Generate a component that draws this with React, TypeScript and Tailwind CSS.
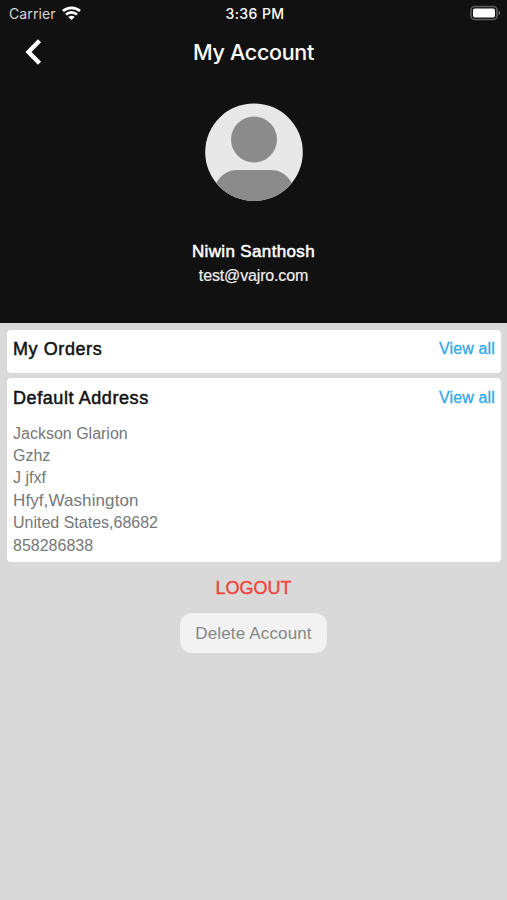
const addressLines = [
  { text: "Jackson Glarion" },
  { text: "Gzhz" },
  { text: "J jfxf" },
  { text: "Hfyf,Washington", large: true },
  { text: "United States,68682" },
  { text: "858286838" },
];

function StatusBar() {
  return (
    <div className="grid h-7 grid-cols-[1fr_80px_1fr] items-center pl-[9px] pr-[6px] font-['Inter',sans-serif] text-white">
      <div className="flex items-center gap-[6px]">
        <span className="text-[14px] leading-7 tracking-[0.1px] text-[#d6d6d6]">
          Carrier
        </span>
        <svg className="-mt-[2px]" width="19" height="14" viewBox="0 0 19 14" fill="none" stroke="white" strokeWidth="2.7">
          <path d="M1 5.1C5.7 .7 13.3 .7 18 5.1" />
          <path d="M4 8.6C7 5.7 12 5.7 15 8.6" />
          <path d="M9.5 13.9 6.3 10.900C8.1 9.2 10.900 9.2 12.700 10.900Z" fill="white" stroke="none" />
        </svg>
      </div>
      <span className="text-center text-[14px] font-medium leading-7 tracking-[0.4px]">
        3:36 PM
      </span>
      <svg className="-mt-[2px] ml-auto" width="31" height="16" viewBox="0 0 31 16">
        <rect x="1" y="1.5" width="26" height="13" rx="3.6" fill="#111" stroke="#5c5c5c" strokeWidth="1.6" />
        <rect x="3" y="3.5" width="22" height="9" rx="1.8" fill="white" />
        <path d="M28.6 5.6C30.8 6.6 30.8 9.4 28.6 10.4Z" fill="#6b6b6b" />
      </svg>
    </div>
  );
}

function Avatar() {
  return (
    <svg className="mx-auto mt-[27px]" width="98" height="98" viewBox="0 0 98 98">
      <defs>
        <clipPath id="avatar">
          <circle cx="49" cy="49.2" r="48.8" />
        </clipPath>
      </defs>
      <g clipPath="url(#avatar)">
        <rect width="98" height="98" fill="#e8e8e8" />
        <circle cx="49" cy="36.5" r="23" fill="#8b8b8b" />
        <path d="M5 98V90L11 80.500C16 71.500 23 67 32 67H66C75 67 82 71.500 87 80.500L93 90V98Z" fill="#8b8b8b" />
      </g>
    </svg>
  );
}

function CardHeader({ title }: { title: string }) {
  return (
    <div className="flex items-center justify-between leading-6">
      <h2 className="text-[18px] tracking-[0.58px] text-[#111] [-webkit-text-stroke:0.5px]">
        {title}
      </h2>
      <button
        type="button"
        className="text-[16px] leading-6 tracking-[0.15px] text-[#2fa8ec] [-webkit-text-stroke:0.3px]"
      >
        View all
      </button>
    </div>
  );
}

export default function App() {
  return (
    <div className="h-[900px] w-[507px] overflow-hidden bg-[#d9d9d9] font-['Liberation_Sans',Arial,sans-serif]">
      <header className="h-[323px] bg-[#111] text-white">
        <StatusBar />
        <div className="grid h-12 grid-cols-[60px_1fr_60px] items-center">
          <button type="button" aria-label="Back" className="ml-[25px] w-4">
            <svg width="17" height="26" viewBox="0 0 17 26" fill="none" stroke="white" strokeWidth="4.4">
              <path d="M14.500 1.800 3.500 13 14.500 24.200" />
            </svg>
          </button>
          <h1 className="text-center font-['Inter',sans-serif] text-[21.500px] font-medium tracking-[-0.3px]">
            My Account
          </h1>
        </div>
        <Avatar />
        <div className="mt-[39px] text-center leading-6">
          <p className="text-[17px] tracking-[0.35px] [-webkit-text-stroke:0.5px]">
            Niwin Santhosh
          </p>
          <p className="text-[16px] tracking-[-0.15px] text-[#efefef] [-webkit-text-stroke:0.2px]">
            test@vajro.com
          </p>
        </div>
      </header>

      <main className="flex flex-col gap-[5px] px-[7px] pt-[6.500px] pr-[6px]">
        <section className="h-[43px] rounded bg-white px-[6px] pt-[7.500px]">
          <CardHeader title="My Orders" />
        </section>
        <section className="h-[184px] rounded bg-white px-[6px] pt-[8px]">
          <CardHeader title="Default Address" />
          <div className="mt-[13px] text-[16px] leading-[22.4px] text-[#777]">
            {addressLines.map((line) => (
              <p key={line.text} className={line.large ? "text-[17px] tracking-[0.1px]" : ""}>
                {line.text}
              </p>
            ))}
          </div>
        </section>
      </main>

      <div className="mt-[14.500px] flex flex-col items-center gap-[13px]">
        <button
          type="button"
          className="text-[18px] leading-6 text-[#f0443c] [-webkit-text-stroke:0.4px]"
        >
          LOGOUT
        </button>
        <button
          type="button"
          className="h-[40px] w-[147px] rounded-xl bg-[#f2f2f2] pt-[2px] text-[17px] tracking-[0.15px] text-[#868686]"
        >
          Delete Account
        </button>
      </div>
    </div>
  );
}
